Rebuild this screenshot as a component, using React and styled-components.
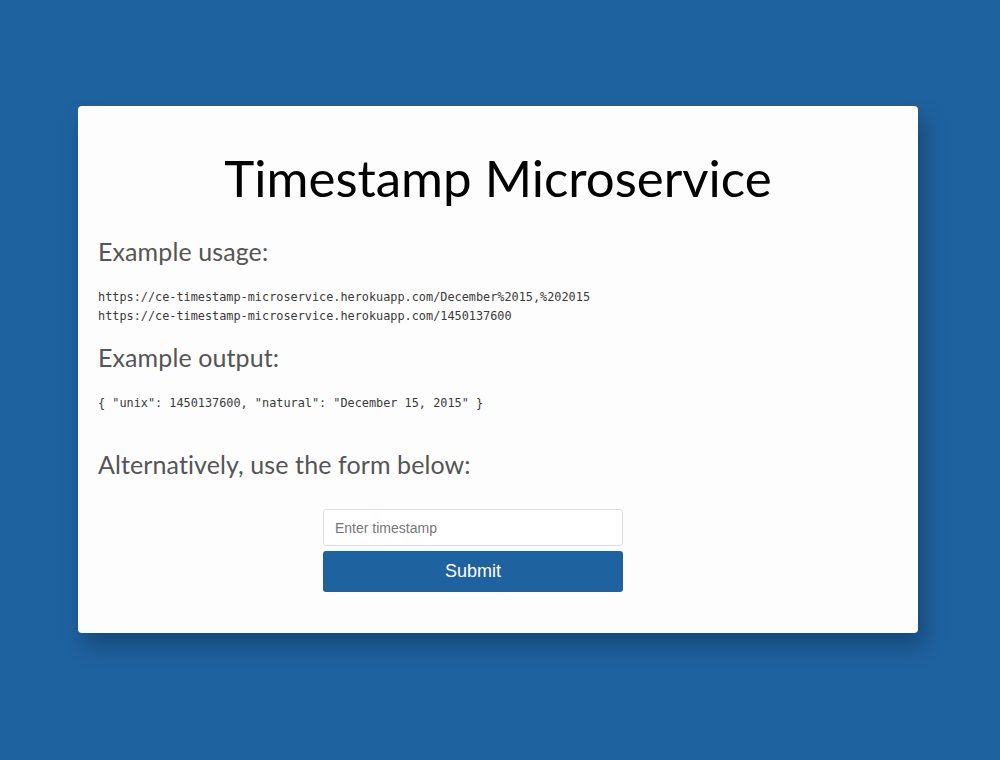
import React, { useState } from "react";
import styled, { createGlobalStyle } from "styled-components";

const GlobalStyle = createGlobalStyle`
  html, body {
    margin: 0;
    padding: 0;
    background-color: #1f62a0;
  }
  body {
    font-family: "Lato", "Liberation Sans", sans-serif;
  }
`;

const Page = styled.div`
  min-height: 760px;
  display: flex;
  justify-content: center;
  align-items: flex-start;
  padding: 106px 4px 0 0;
  box-sizing: border-box;
`;

const Card = styled.div`
  width: 840px;
  box-sizing: border-box;
  background-color: #fdfdfd;
  border-radius: 4px;
  padding: 40px 20px 41px;
  box-shadow: 6px 12px 22px rgba(0, 0, 0, 0.28);
`;

const Title = styled.h1`
  margin: 0 0 26px;
  text-align: center;
  font-family: "Lato", sans-serif;
  font-weight: 400;
  font-size: 51px;
  line-height: 64px;
  color: #000;
`;

const Heading = styled.h3`
  margin: ${(p) => p.$top || 0}px 0 0;
  font-family: "Lato", sans-serif;
  font-weight: 400;
  font-size: 25px;
  line-height: 30px;
  color: #555;
  letter-spacing: 0.1px;
`;

const Code = styled.pre`
  margin: 22px 0 0;
  font-family: "DejaVu Sans Mono", "Liberation Mono", monospace;
  font-size: 11.85px;
  line-height: 19px;
  color: #3a3a3a;
`;

const Form = styled.form`
  display: flex;
  flex-direction: column;
  gap: 5px;
  width: 300px;
  margin: 30px 0 0 225px;
`;

const Input = styled.input`
  width: 300px;
  height: 37px;
  box-sizing: border-box;
  padding: 0 11px;
  border: 1px solid #ddd;
  border-radius: 3px;
  background: #fff;
  font-family: "Liberation Sans", Arial, sans-serif;
  font-size: 14px;
  color: #333;
  outline: none;

  &::placeholder {
    color: #777;
  }
`;

const Button = styled.button`
  width: 300px;
  height: 41px;
  border: none;
  border-radius: 3px;
  background-color: #1f62a0;
  color: #fff;
  font-family: "Liberation Sans", Arial, sans-serif;
  font-size: 18px;
  font-weight: 400;
  cursor: pointer;
`;

const App = () => {
  const [value, setValue] = useState("");

  return (
    <>
      <GlobalStyle />
      <Page>
        <Card>
          <Title>Timestamp Microservice</Title>
          <Heading>Example usage:</Heading>
          <Code>
            {"https://ce-timestamp-microservice.herokuapp.com/December%2015,%202015\nhttps://ce-timestamp-microservice.herokuapp.com/1450137600"}
          </Code>
          <Heading $top={16}>Example output:</Heading>
          <Code>{'{ "unix": 1450137600, "natural": "December 15, 2015" }'}</Code>
          <Heading $top={36}>Alternatively, use the form below:</Heading>
          <Form onSubmit={(e) => e.preventDefault()}>
            <Input
              type="text"
              placeholder="Enter timestamp"
              value={value}
              onChange={(e) => setValue(e.target.value)}
            />
            <Button type="submit">Submit</Button>
          </Form>
        </Card>
      </Page>
    </>
  );
};

export default App;
